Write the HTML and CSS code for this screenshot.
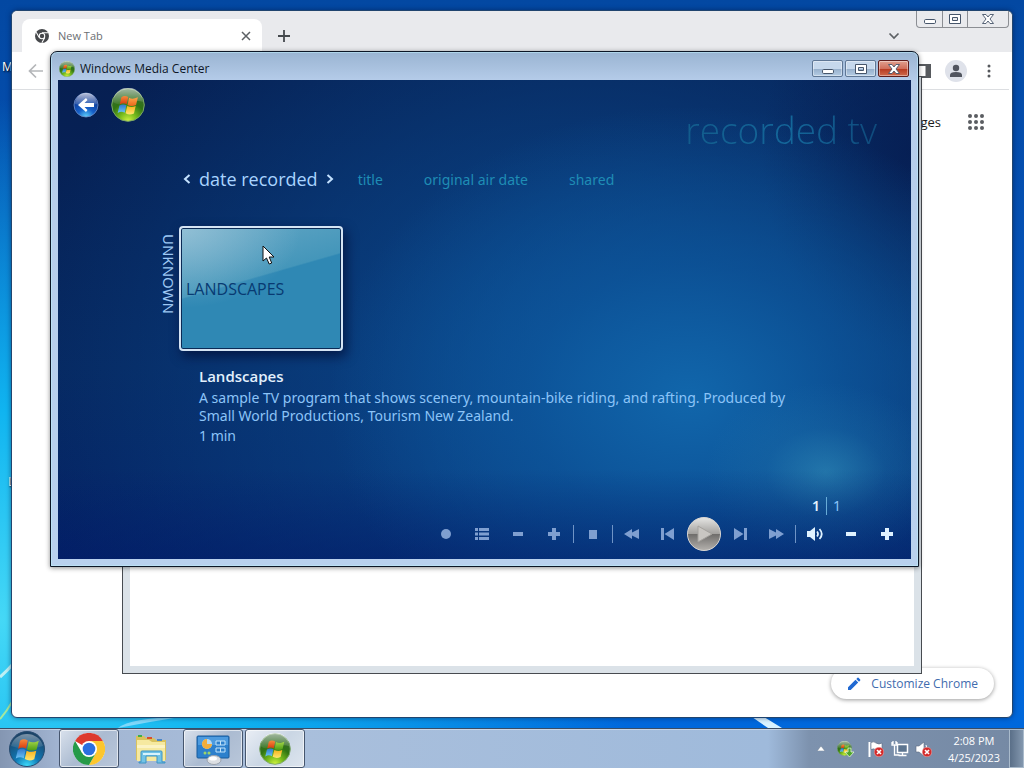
FILE: index.html
```html
<!DOCTYPE html>
<html lang="en">
<head>
	<meta charset="utf-8">
	<meta name="viewport" content="width=device-width, initial-scale=1">
	<title>Windows Media Center</title>
	<link rel="stylesheet" href="styles.css">
</head>
<body>
<!-- shared shapes -->
<svg class="defs" width="0" height="0" aria-hidden="true">
	<defs>
		<linearGradient id="red" x1="0" x2="0" y1="0" y2="1"><stop offset="0" stop-color="#f58a3c"></stop><stop offset="1" stop-color="#d8380c"></stop></linearGradient>
		<linearGradient id="green" x1="0" x2="0" y1="0" y2="1"><stop offset="0" stop-color="#a4d648"></stop><stop offset="1" stop-color="#4c9c14"></stop></linearGradient>
		<linearGradient id="orange" x1="0" x2="0" y1="0" y2="1"><stop offset="0" stop-color="#ffa64a"></stop><stop offset="1" stop-color="#e8681c"></stop></linearGradient>
		<linearGradient id="blue" x1="0" x2="0" y1="0" y2="1"><stop offset="0" stop-color="#2f78cc"></stop><stop offset="1" stop-color="#6cc4f4"></stop></linearGradient>
		<linearGradient id="yellow" x1="0" x2="0" y1="0" y2="1"><stop offset="0" stop-color="#f7b21c"></stop><stop offset="1" stop-color="#ffe670"></stop></linearGradient>
		<radialGradient id="orb-green" cx="0.5" cy="1" r="0.95"><stop offset="0" stop-color="#d4f640"></stop><stop offset="0.3" stop-color="#74b81c"></stop><stop offset="0.6" stop-color="#2f7414"></stop><stop offset="1" stop-color="#3a6a34"></stop></radialGradient>
		<radialGradient id="orb-blue" cx="0.5" cy="1" r="0.9"><stop offset="0" stop-color="#3fe0ff"></stop><stop offset="0.4" stop-color="#1078b4"></stop><stop offset="1" stop-color="#1b4468"></stop></radialGradient>
		<radialGradient id="orb-back" cx="0.5" cy="1" r="0.9"><stop offset="0" stop-color="#5fd4ff"></stop><stop offset="0.4" stop-color="#1660c8"></stop><stop offset="1" stop-color="#0a2c84"></stop></radialGradient>
		<linearGradient id="gloss" x1="0" x2="0" y1="0" y2="1"><stop offset="0" stop-color="#fff" stop-opacity="0.85"></stop><stop offset="1" stop-color="#fff" stop-opacity="0.1"></stop></linearGradient>
		<linearGradient id="play-top" x1="0" x2="0" y1="0" y2="1"><stop offset="0" stop-color="#e6e6e4"></stop><stop offset="0.49" stop-color="#a3a19e"></stop><stop offset="0.5" stop-color="#6e6c6a"></stop><stop offset="1" stop-color="#b5b2ae"></stop></linearGradient>
	</defs>
	<symbol id="panes" viewBox="0 0 20 20">
		<path fill="url(#red)" d="M4 3 C6 1.500 8 1.500 10.200 2.800 L8.800 9.300 C7 8.200 5 8.200 2.500 9.500 Z"></path>
		<path fill="url(#blue)" d="M2.200 10.500 C4.500 9.200 6.500 9.200 8.500 10.300 L7 17 C5 15.800 3 15.800 0.600 17.200 Z"></path>
		<path fill="url(#yellow)" d="M9.300 10.900 C12 12.200 14.200 12.200 17 11 L15.400 17.700 C12.500 19.200 10.200 18.900 7.800 17.600 Z"></path>
	</symbol>
	<symbol id="flag" viewBox="0 0 20 20">
		<use href="#panes" width="20" height="20"></use>
		<path fill="url(#green)" d="M11 3.300 C13 4.600 15.500 4.600 19 3 L17.300 9.900 C14.500 11.200 12 11.200 9.600 9.900 Z"></path>
	</symbol>
	<symbol id="flag-warm" viewBox="0 0 20 20">
		<use href="#panes" width="20" height="20"></use>
		<path fill="url(#orange)" d="M11 3.300 C13 4.600 15.500 4.600 19 3 L17.300 9.900 C14.500 11.200 12 11.200 9.600 9.900 Z"></path>
	</symbol>
	<symbol id="glass" viewBox="0 0 34 34">
		<circle cx="17" cy="17" r="16.300" fill="url(#orb-green)" stroke="#7da868" stroke-width="1"></circle>
		<path fill="url(#gloss)" opacity="0.65" d="M2 14 A15 14.500 0 0 1 32 14 C24 11 20 15 15 16 C9 17 4 16 2 14 Z"></path>
	</symbol>
	<symbol id="media-orb" viewBox="0 0 34 34">
		<use href="#glass" width="34" height="34"></use>
		<use href="#flag" x="6" y="6" width="22" height="22"></use>
	</symbol>
	<symbol id="bad" viewBox="0 0 10 10">
		<circle cx="5" cy="5" r="4.800" fill="#d42a2a" stroke="#f4b8b8" stroke-width="0.500"></circle>
		<path d="M3 3 L7 7 M7 3 L3 7" stroke="#fff" stroke-width="1.600"></path>
	</symbol>
	<symbol id="min" viewBox="0 0 14 12"><rect x="1.500" y="6.500" width="11" height="4" rx="1.200" fill="#fff" stroke="#46556a"></rect></symbol>
	<symbol id="max" viewBox="0 0 14 12"><path fill="#fff" fill-rule="evenodd" stroke="#46556a" d="M1.500 1.500 h11 v9 h-11 Z M4.500 4.500 v3 h5 v-3 Z"></path></symbol>
	<symbol id="close" viewBox="0 0 14 12"><path fill="#fff" stroke="#46556a" stroke-width="0.900" d="M1.500 1.500 h3.500 l2 2.500 l2 -2.500 h3.500 l-3.500 4.500 l3.500 4.500 h-3.500 l-2 -2.500 l-2 2.500 h-3.500 l3.500 -4.500 Z"></path></symbol>
</svg>

<main class="desktop">
	<span class="shortcut shortcut-a">M</span>
	<span class="shortcut shortcut-b">L</span>
	<svg class="rays" viewBox="0 0 1024 728" preserveAspectRatio="none" aria-hidden="true">
		<path d="M0 677 Q8 670 13 664" stroke="#bdf0f4" stroke-width="3" fill="none"></path>
		<path d="M0 719 Q7 711 12 702" stroke="#a4e8a0" stroke-width="2" fill="none"></path>
		<path d="M752 717 L764 717 L782 728 L768 728 Z" fill="#d8f2ff"></path>
		<path d="M118 728 Q130 718 180 717 L150 722 Z" fill="#7fd8fa"></path>
	</svg>

	<!-- browser window -->
	<section class="window chrome">
		<div class="caption chrome-caption">
			<button type="button" aria-label="Minimize browser"><svg width="14" height="12"><use href="#min"></use></svg></button>
			<button type="button" aria-label="Maximize browser"><svg width="14" height="12"><use href="#max"></use></svg></button>
			<button type="button" aria-label="Close browser"><svg width="14" height="12"><use href="#close"></use></svg></button>
		</div>
		<header class="tabstrip">
			<div class="tab">
				<svg width="14" height="14" viewBox="0 0 16 16"><circle cx="8" cy="8" r="8" fill="#46484b"></circle><circle cx="8" cy="8" r="3.700" fill="#fff"></circle><circle cx="8" cy="8" r="2.500" fill="#46484b"></circle><path d="M8 4.300 H15.200 M4.800 9.800 L1.400 3.800 M11.200 9.800 L7.800 15.800" stroke="#fff" stroke-width="1.200"></path></svg>
				<span class="tab-name">New Tab</span>
				<button type="button" aria-label="Close tab"><svg width="10" height="10" viewBox="0 0 10 10"><path d="M1 1 L9 9 M9 1 L1 9" stroke="#5c6064" stroke-width="1.500"></path></svg></button>
			</div>
			<button type="button" class="new-tab" aria-label="New tab"><svg width="12" height="12" viewBox="0 0 12 12"><path d="M6 0 V12 M0 6 H12" stroke="#45494d" stroke-width="1.800"></path></svg></button>
			<button type="button" class="tab-search" aria-label="Search tabs"><svg width="12" height="8" viewBox="0 0 12 8"><path d="M1.500 1.500 L6 6 L10.500 1.500" stroke="#5c6064" stroke-width="1.700" fill="none"></path></svg></button>
		</header>
		<div class="toolbar">
			<button type="button" aria-label="Back"><svg width="16" height="16" viewBox="0 0 16 16"><path d="M15 8 H2 M8 1.500 L1.500 8 L8 14.500" stroke="#b4b6b9" stroke-width="1.700" fill="none"></path></svg></button>
			<span class="spacer"></span>
			<button type="button" aria-label="Side panel"><svg width="16" height="14" viewBox="0 0 16 14"><path fill="#56595d" fill-rule="evenodd" d="M0 0 H16 V14 H0 Z M2 2 V12 H10.500 V2 Z"></path></svg></button>
			<button type="button" class="profile" aria-label="Profile"><svg width="14" height="14" viewBox="0 0 14 14"><circle cx="7" cy="4" r="3.200" fill="#51555f"></circle><path d="M1 13 V11 Q1 8 7 8 Q13 8 13 11 V13 Z" fill="#51555f"></path></svg></button>
			<button type="button" aria-label="Menu"><svg width="4" height="14" viewBox="0 0 4 14"><circle cx="2" cy="2" r="1.500" fill="#55585c"></circle><circle cx="2" cy="7" r="1.500" fill="#55585c"></circle><circle cx="2" cy="12" r="1.500" fill="#55585c"></circle></svg></button>
		</div>
		<div class="page">
			<nav class="page-nav">
				<a href="#images">Images</a>
				<button type="button" aria-label="Apps"><svg width="18" height="18" viewBox="0 0 18 18"><g fill="#5a5d61"><circle cx="3" cy="3" r="2"></circle><circle cx="9" cy="3" r="2"></circle><circle cx="15" cy="3" r="2"></circle><circle cx="3" cy="9" r="2"></circle><circle cx="9" cy="9" r="2"></circle><circle cx="15" cy="9" r="2"></circle><circle cx="3" cy="15" r="2"></circle><circle cx="9" cy="15" r="2"></circle><circle cx="15" cy="15" r="2"></circle></g></svg></button>
			</nav>
			<button type="button" class="customize">
				<svg width="14" height="14" viewBox="0 0 14 14"><path fill="#2069d2" d="M1 10.300 L8.500 2.800 L11.200 5.500 L3.700 13 H1 Z M9.300 2 L10.500 0.800 Q11 0.400 11.500 0.800 L13.200 2.500 Q13.600 3 13.200 3.500 L12 4.700 Z"></path></svg>
				Customize Chrome
			</button>
		</div>
	</section>

	<section class="window blank"><div class="blank-page"></div></section>

	<!-- media center -->
	<section class="window media">
		<header class="titlebar">
			<svg width="16" height="16"><use href="#media-orb"></use></svg>
			<span class="title">Windows Media Center</span>
			<div class="caption media-caption">
				<button type="button" aria-label="Minimize"><svg width="14" height="12"><use href="#min"></use></svg></button>
				<button type="button" aria-label="Maximize"><svg width="14" height="12"><use href="#max"></use></svg></button>
				<button type="button" class="close" aria-label="Close"><svg width="14" height="12"><use href="#close"></use></svg></button>
			</div>
		</header>
		<div class="view">
			<div class="view-head">
				<button type="button" aria-label="Back"><svg width="26" height="26" viewBox="0 0 26 26"><circle cx="13" cy="13" r="12" fill="url(#orb-back)" stroke="#6f8fc8" stroke-width="0.800"></circle><path d="M2 12 A11 11 0 0 1 24 12 Q13 15 2 12 Z" fill="url(#gloss)" opacity="0.85"></path><path fill="#fff" d="M5 13 L13 6 L14.500 8 L11.500 11 H21 V15 H11.500 L14.500 18 L13 20 Z"></path></svg></button>
				<button type="button" aria-label="Start menu"><svg width="34" height="34" viewBox="0 0 34 34"><use href="#glass" width="34" height="34"></use><use href="#flag-warm" x="6" y="6" width="22" height="22"></use></svg></button>
				<h1>recorded tv</h1>
			</div>
			<nav class="sorts">
				<button type="button" aria-label="Previous sort"><svg width="8" height="10" viewBox="0 0 8 10"><path d="M6.500 1 L2 5 L6.500 9" stroke="#c4e2ff" stroke-width="2" fill="none"></path></svg></button>
				<a href="#date" class="active">date recorded</a>
				<button type="button" aria-label="Next sort"><svg width="8" height="10" viewBox="0 0 8 10"><path d="M1.500 1 L6 5 L1.500 9" stroke="#c4e2ff" stroke-width="2" fill="none"></path></svg></button>
				<div class="others">
					<a href="#title">title</a>
					<a href="#air">original air date</a>
					<a href="#shared">shared</a>
				</div>
			</nav>
			<div class="gallery">
				<span class="group">UNKNOWN</span>
				<button type="button" class="tile">LANDSCAPES</button>
			</div>
			<article class="details">
				<h2>Landscapes</h2>
				<p>A sample TV program that shows scenery, mountain-bike riding, and rafting. Produced by Small World Productions, Tourism New Zealand.</p>
				<p class="length">1 min</p>
			</article>
			<div class="pager"><b>1</b><span>1</span></div>
			<div class="transport">
				<button type="button" aria-label="Record"><svg width="16" height="16" viewBox="0 0 16 16"><circle cx="8" cy="8" r="5"></circle></svg></button>
				<button type="button" aria-label="Guide"><svg width="16" height="16" viewBox="0 0 16 16"><path d="M1 2 h3 v3 h-3 Z M5 2 h10 v3 h-10 Z M1 6.500 h3 v3 h-3 Z M5 6.500 h10 v3 h-10 Z M1 11 h3 v3 h-3 Z M5 11 h10 v3 h-10 Z"></path></svg></button>
				<button type="button" aria-label="Channel down"><svg width="16" height="16" viewBox="0 0 16 16"><path d="M3 6 h10 v4 h-10 Z"></path></svg></button>
				<button type="button" aria-label="Channel up"><svg width="16" height="16" viewBox="0 0 16 16"><path d="M6 2 h4 v4 h4 v4 h-4 v4 h-4 v-4 h-4 v-4 h4 Z"></path></svg></button>
				<i class="rule"></i>
				<button type="button" aria-label="Stop"><svg width="16" height="16" viewBox="0 0 16 16"><path d="M4 4 h8 v9 h-8 Z"></path></svg></button>
				<i class="rule"></i>
				<button type="button" aria-label="Rewind"><svg width="16" height="16" viewBox="0 0 16 16"><path d="M0 8 L8 3 V6.500 L15 3 V13 L8 9.500 V13 Z"></path></svg></button>
				<button type="button" aria-label="Previous"><svg width="16" height="16" viewBox="0 0 16 16"><path d="M1 2 h3 v12 h-3 Z M4.500 8 L14 2 V14 Z"></path></svg></button>
				<button type="button" class="play" aria-label="Play"><svg width="36" height="36" viewBox="0 0 36 36"><circle cx="18" cy="18" r="16.500" fill="url(#play-top)" stroke="#d9d6d2"></circle><path d="M12 10 L26 18 L12 26 Z" fill="#c9c6c2" stroke="#a5a29e"></path></svg></button>
				<button type="button" aria-label="Next"><svg width="16" height="16" viewBox="0 0 16 16"><path d="M2 2 L11.500 8 L2 14 Z M12 2 h3 v12 h-3 Z"></path></svg></button>
				<button type="button" aria-label="Fast forward"><svg width="16" height="16" viewBox="0 0 16 16"><path d="M16 8 L8 3 V6.500 L1 3 V13 L8 9.500 V13 Z"></path></svg></button>
				<i class="rule"></i>
				<button type="button" class="bright" aria-label="Mute"><svg width="16" height="16" viewBox="0 0 16 16"><path d="M0 5 h3 L8 1 V15 L3 11 H0 Z"></path><path d="M10 5.500 Q12 8 10 10.500 M12.500 3 Q17 8 12.500 13" fill="none" stroke="#dff2ff" stroke-width="1.800"></path></svg></button>
				<button type="button" class="bright" aria-label="Volume down"><svg width="16" height="16" viewBox="0 0 16 16"><path d="M3 6 h10 v4 h-10 Z"></path></svg></button>
				<button type="button" class="bright" aria-label="Volume up"><svg width="16" height="16" viewBox="0 0 16 16"><path d="M6 2 h4 v4 h4 v4 h-4 v4 h-4 v-4 h-4 v-4 h4 Z"></path></svg></button>
			</div>
		</div>
	</section>

	<svg class="pointer" width="14" height="21" viewBox="0 0 14 21" aria-hidden="true"><path d="M1 1 V16 L4.500 13 L7.200 19 L9.700 18 L7.200 12 L12 12 Z" fill="#fff" stroke="#111"></path></svg>
</main>

<footer class="taskbar">
	<button type="button" class="start" aria-label="Start"><svg width="38" height="38" viewBox="0 0 38 38"><circle cx="19" cy="19" r="17.500" fill="url(#orb-blue)" stroke="#274b70"></circle><path d="M3 16 A16.500 16 0 0 1 35 16 Q19 22 3 16 Z" fill="url(#gloss)" opacity="0.5"></path><use href="#flag" x="7" y="7" width="25" height="25"></use></svg></button>
	<button type="button" class="task open" aria-label="Google Chrome"><svg width="32" height="32" viewBox="0 0 32 32"><circle cx="16" cy="16" r="16" fill="#fff"></circle><path fill="#dd3a2e" d="M16 16 L2.100 8 A16 16 0 0 1 29.900 8 Z"></path><path fill="#fcc62d" d="M16 16 V8 H29.900 A16 16 0 0 1 16 32 L22.900 20 Z"></path><path fill="#269a48" d="M16 16 L22.900 20 L16 32 A16 16 0 0 1 2.100 8 L9.100 20 Z"></path><circle cx="16" cy="16" r="8" fill="#fff"></circle><circle cx="16" cy="16" r="6.300" fill="#2a6fe0"></circle></svg></button>
	<button type="button" class="task" aria-label="Windows Explorer"><svg width="34" height="32" viewBox="0 0 34 32"><path fill="#d9c25e" d="M2 3 h8 l2 2 h8 l2 2 h10 v20 h-30 Z"></path><path fill="#f6e9a0" d="M3 7 h12 l3 2 h13 v19 h-28 Z"></path><path fill="#3fae49" d="M4 2 h4 v2 h-4 Z"></path><path fill="#d9502e" d="M13 4 h5 v2 h-5 Z"></path><path fill="#4a86c8" d="M23 6 h5 v2 h-5 Z"></path><path fill="#fbf3c4" d="M3 12 h28 v3 h-28 Z"></path><path fill="#72c3e6" stroke="#3d93c4" d="M7 19 q0 -1 1 -1 h19 q1 0 1 1 v10 h3 v1 h-8 v-7 h-11 v7 h-7 v-1 h2 Z"></path><path fill="#d8f3fc" d="M9 20 h17 v2 h-17 Z"></path></svg></button>
	<button type="button" class="task open" aria-label="Control Panel"><svg width="34" height="32" viewBox="0 0 34 32"><rect x="1" y="3" width="32" height="22" rx="1" fill="#2d80cc" stroke="#195a9b"></rect><path fill="#4d9bdf" d="M2 4 h30 v8 h-30 Z"></path><circle cx="11" cy="11" r="5" fill="#b8d9ef"></circle><path fill="#f1ad3c" d="M11 11 V6 A5 5 0 1 0 16 11 Z"></path><path fill="#2d80cc" stroke="#c2e3fa" d="M20 8 h9 v4 h-9 Z M20 15 h9 v4 h-9 Z M24.500 8 v4 M24.500 15 v4"></path><circle cx="9" cy="20" r="1.500" fill="#9bd36a"></circle><circle cx="13" cy="20" r="1.500" fill="#9bd36a"></circle><ellipse cx="18" cy="27" rx="7" ry="4.500" fill="#dcdfe3" stroke="#9aa2ad"></ellipse><ellipse cx="17" cy="25.500" rx="4" ry="2" fill="#fff"></ellipse></svg></button>
	<button type="button" class="task open current" aria-label="Windows Media Center"><svg width="32" height="32"><use href="#media-orb"></use></svg></button>

	<div class="tray">
		<button type="button" class="more" aria-label="Show hidden icons"><svg width="8" height="5" viewBox="0 0 8 5"><path d="M0 5 L4 0 L8 5 Z" fill="#fff" stroke="#68788c" stroke-width="0.500"></path></svg></button>
		<button type="button" class="updates" aria-label="Updates"><svg width="18" height="18" viewBox="0 0 18 18"><use href="#media-orb" x="0" y="1" width="15" height="15"></use><path d="M11 8 h3 v4 h3 l-4.500 5 l-4.500 -5 h3 Z" fill="#4ea52a" stroke="#e7f7d8" stroke-width="0.800"></path></svg></button>
		<button type="button" aria-label="Action Center"><svg width="18" height="18" viewBox="0 0 18 18"><path d="M2.500 2 V17" stroke="#fff" stroke-width="2"></path><path d="M4 2.500 Q7 1 9 3 Q12 5 15 3 V10 Q12 12 9 10 Q7 8 4 9.500 Z" fill="#fff" stroke="#5a6a80" stroke-width="0.600"></path><use href="#bad" x="7" y="7" width="10" height="10"></use></svg></button>
		<button type="button" aria-label="Network"><svg width="18" height="18" viewBox="0 0 18 18"><path d="M6.500 4.500 h10 v8 h-10 Z" fill="#5d7590" stroke="#fff" stroke-width="1.500"></path><path d="M11.500 13 v2 M7.500 15.500 h8 M1 2 v3 h5 v-3 M3.500 5 v10 h5 M2 1 v3 M5 1 v3" stroke="#fff" stroke-width="1.300" fill="none"></path></svg></button>
		<button type="button" aria-label="Speakers"><svg width="18" height="18" viewBox="0 0 18 18"><path d="M1 6 h3 L9 2 V16 L4 12 H1 Z" fill="#fff" stroke="#5a6a80" stroke-width="0.600"></path><path d="M11 5 Q13 9 11 12" stroke="#fff" fill="none"></path><use href="#bad" x="7" y="7" width="10" height="10"></use></svg></button>
		<time class="clock" datetime="2023-04-25T14:08"><span>2:08 PM</span><span>4/25/2023</span></time>
	</div>
	<button type="button" class="show-desktop" aria-label="Show desktop"></button>
</footer>
</body>
</html>
```
FILE: styles.css
```css
* {
  box-sizing: border-box;
  padding: 0;
  margin: 0;
}
body {
  height: 100vh;
  display: flex;
  flex-direction: column;
  overflow: hidden;
  font-family: "Open Sans", "Noto Sans", sans-serif;
  font-size: 12px;
  color: #1b1b1b;
}
button {
  border: none;
  background: none;
  font: inherit;
  color: inherit;
  display: flex;
  align-items: center;
  justify-content: center;
}
a {
  color: inherit;
  text-decoration: none;
}
svg {
  display: block;
  flex: none;
}
.defs {
  position: absolute;
}

/* desktop, the windows float on it */
.desktop {
  flex: 1;
  position: relative;
  overflow: hidden;
  background:
    radial-gradient(ellipse 640px 520px at 0% 85%, #45d8f6 0%, #10b4f0 40%, rgba(8, 130, 226, 0) 100%),
    linear-gradient(#0348a2, #0550b2 30%, #0068dc 100%);
}
.rays {
  position: absolute;
  inset: 0;
  width: 100%;
  height: 100%;
}
.shortcut {
  position: absolute;
  color: #fff;
  text-shadow: 1px 1px 2px #000;
}
.shortcut-a {
  left: 2px;
  top: 58px;
}
.shortcut-b {
  left: 8px;
  top: 473px;
}
.window {
  position: absolute;
  border: 1px solid #1d2b3f;
}

/* browser */
.chrome {
  inset: 10px 11px 10px 11px;
  display: flex;
  flex-direction: column;
  background: #fff;
  border-color: #21456f;
  border-radius: 6px;
  box-shadow: 0 0 5px rgba(0, 20, 60, 0.5);
}
.caption {
  display: flex;
}
.chrome-caption {
  position: absolute;
  top: 0;
  right: 3px;
  height: 17px;
  border: 1px solid #8b8e93;
  border-top: none;
  border-radius: 0 0 4px 4px;
}
.chrome-caption button {
  width: 25px;
}
.chrome-caption button:last-child {
  width: 41px;
}
.chrome-caption button + button {
  border-left: 1px solid #8b8e93;
}
.tabstrip {
  display: flex;
  align-items: center;
  height: 41px;
  padding: 8px 112px 0 10px;
  background: #e9eaed;
  border-radius: 6px 6px 0 0;
}
.tab {
  display: flex;
  align-items: center;
  gap: 9px;
  width: 240px;
  height: 33px;
  padding: 0 11px 0 13px;
  background: #fff;
  border-radius: 8px 8px 0 0;
  color: #6b6e72;
}
.tab-name {
  flex: 1;
  font-size: 11px;
}
.new-tab {
  margin-left: 16px;
}
.tab-search {
  margin-left: auto;
}
.toolbar {
  display: flex;
  align-items: center;
  gap: 18px;
  height: 38px;
  padding: 0 18px 0 16px;
  margin-right: 3px;
  border-bottom: 1px solid #dcdee1;
}
.toolbar .spacer {
  flex: 1;
}
.profile {
  width: 22px;
  height: 22px;
  margin-left: -4px;
  margin-right: 2px;
  border-radius: 50%;
  background: #dfe2ea;
}
.page {
  flex: 1;
  display: flex;
  flex-direction: column;
  justify-content: space-between;
  align-items: flex-end;
  padding: 20px 18px 18px;
}
.page-nav {
  display: flex;
  align-items: center;
  gap: 26px;
  height: 24px;
  padding-right: 9px;
}
.page-nav a {
  font-size: 13px;
  line-height: 22px;
}
.customize {
  gap: 10px;
  height: 31px;
  padding: 0 16px;
  border-radius: 16px;
  background: #fff;
  box-shadow: 0 1px 4px rgba(0, 0, 0, 0.4);
  color: #3f6cae;
}

/* empty window between the two others */
.blank {
  inset: 76px 102px 54px 122px;
  padding: 7px;
  background: #dbe2e8;
  border-color: #474b50;
}
.blank-page {
  height: 100%;
  background: #fff;
}

/* media center */
.media {
  inset: 51px 105px 161px 50px;
  display: flex;
  flex-direction: column;
  padding: 0 7px 7px;
  border-color: #0c1626;
  border-radius: 7px 7px 0 0;
  background: linear-gradient(#9ab4d2, #b6cdea 30px, #b9d1ee);
  box-shadow: inset 0 0 0 1px rgba(190, 235, 250, 0.6), 0 1px 5px rgba(0, 0, 0, 0.45);
}
.titlebar {
  display: flex;
  align-items: center;
  gap: 5px;
  height: 28px;
  padding: 5px 2px 0 1px;
  color: #0d1626;
}
.title {
  flex: 1;
}
.media-caption {
  gap: 2px;
}
.media-caption button {
  width: 31px;
  height: 17px;
  border: 1px solid #5f7795;
  border-radius: 2px;
  background: linear-gradient(#c6d8ec 50%, #94adc9 50%, #b4cce4);
  box-shadow: inset 0 0 0 1px rgba(255, 255, 255, 0.4);
}
.media-caption .close {
  border-color: #5e1d1c;
  background: linear-gradient(#e0a08f, #d1705c 50%, #b5361d 50%, #cf6a4c);
}
.view {
  flex: 1;
  display: flex;
  flex-direction: column;
  /* bottom shade, teal glow, main glow, dark corner, base */
  background:
    linear-gradient(to top, rgba(2, 28, 104, 0.55), rgba(2, 28, 104, 0) 90px),
    radial-gradient(ellipse 120px 90px at 90% 82%, rgba(54, 150, 190, 0.55), rgba(40, 130, 180, 0.2) 50%, rgba(40, 130, 180, 0)),
    radial-gradient(ellipse 360px 290px at 74% 66%, #1166ab, rgba(13, 88, 158, 0.7) 45%, rgba(10, 70, 140, 0)),
    radial-gradient(ellipse 150px 200px at 100% 15%, rgba(6, 28, 80, 0.8), rgba(6, 28, 80, 0)),
    radial-gradient(ellipse 580px 480px at 62% 62%, #0b4b90, rgba(8, 50, 110, 0)),
    linear-gradient(#061f52, #06275f 60%, #042265);
  font-family: "Noto Sans", "Open Sans", sans-serif;
  color: #8cc4f8;
}
.view-head {
  display: flex;
  align-items: flex-start;
  gap: 12px;
  padding: 8px 34px 0 15px;
}
.view-head button {
  height: 34px;
}
.view-head h1 {
  margin-left: auto;
  padding-top: 18px;
  font-family: "Open Sans", "Noto Sans", sans-serif;
  font-size: 37px;
  font-weight: 300;
  line-height: 48px;
  color: transparent;
  background: linear-gradient(90deg, #125c8c, #14679a 55%, #0f4a7c);
  -webkit-background-clip: text;
  background-clip: text;
}
.sorts {
  display: flex;
  align-items: center;
  gap: 8px;
  height: 26px;
  margin-top: 12px;
  padding-left: 125px;
  font-size: 14px;
  color: #1f8db5;
}
.sorts .active {
  font-family: "Open Sans", "Noto Sans", sans-serif;
  font-size: 18px;
  color: #a9d4ff;
}
.others {
  display: flex;
  gap: 41px;
  padding-left: 16px;
}
.gallery {
  display: flex;
  align-items: flex-start;
  gap: 2px;
  margin-top: 34px;
  padding-left: 103px;
}
.group {
  padding-top: 8px;
  writing-mode: vertical-rl;
  font-size: 15px;
  line-height: 16px;
  color: #9fc9f5;
}
.tile {
  width: 164px;
  height: 125px;
  justify-content: flex-start;
  padding-left: 5px;
  border: 2px solid #d5e4f4;
  border-radius: 4px;
  background:
    radial-gradient(ellipse 120px 80px at 0 0, rgba(190, 215, 228, 0.5), rgba(190, 215, 228, 0)),
    linear-gradient(164deg, #66a8c6 0%, #4496ba 42%, #2f88b4 43%);
  box-shadow: inset 0 0 0 1px #0a2a55, 3px 5px 12px rgba(0, 10, 50, 0.7);
  font-family: "Open Sans", "Noto Sans", sans-serif;
  font-size: 16px;
  color: #083a72;
}
.details {
  padding: 14px 100px 0 141px;
  font-size: 14px;
  line-height: 18px;
}
.details h2 {
  padding-bottom: 2px;
  font-family: "Open Sans", "Noto Sans", sans-serif;
  font-size: 15px;
  font-weight: 600;
  line-height: 22px;
  color: #e2f0fd;
}
.details .length {
  margin-top: 2px;
}
.pager {
  display: flex;
  justify-content: flex-end;
  margin-top: auto;
  padding-right: 70px;
  font-size: 14px;
  line-height: 18px;
}
.pager b {
  padding-right: 6px;
  font-weight: 600;
  color: #e4f4ff;
}
.pager span {
  padding-left: 6px;
  border-left: 1px solid #68acd8;
}
.transport {
  display: flex;
  align-items: center;
  justify-content: flex-end;
  height: 44px;
  padding: 0 6px 6px 0;
}
.transport button {
  width: 36px;
  fill: #7f9fd0;
}
.transport .bright {
  fill: #dff2ff;
}
.rule {
  width: 1px;
  height: 18px;
  margin: 0 1px;
  background: #6f94c6;
}
.pointer {
  position: absolute;
  left: 262px;
  top: 245px;
}

/* taskbar */
.taskbar {
  display: flex;
  height: 40px;
  padding-left: 8px;
  border-top: 1px solid #3a4d66;
  background: linear-gradient(90deg, #8496b2, #a2b5d2 60px, #a9bfdc 300px, #9fbadb 75%, #7d92ae 79%, #7589a4);
  box-shadow: inset 0 1px 0 rgba(255, 255, 255, 0.4);
}
.start {
  margin-right: 13px;
}
.task {
  width: 60px;
  margin-right: 2px;
}
.open {
  border: 1px solid #46566e;
  border-radius: 3px;
  background: linear-gradient(135deg, #d9e1ec, #abbbd1 50%, #b9c7da);
  box-shadow: inset 0 0 0 1px rgba(255, 255, 255, 0.6);
}
.current {
  background: linear-gradient(135deg, #e9eef5, #cad6e4 50%, #dde5ee);
}
.tray {
  display: flex;
  align-items: center;
  gap: 6px;
  margin-left: auto;
}
.updates {
  margin: 0 6px;
}
.clock {
  display: flex;
  flex-direction: column;
  align-items: center;
  padding: 0 9px;
  line-height: 17px;
  font-size: 11px;
  color: #fff;
}
.show-desktop {
  width: 15px;
  border: 1px solid #a9bacb;
  background: linear-gradient(90deg, #5a6f88, #8397ae);
}
```
